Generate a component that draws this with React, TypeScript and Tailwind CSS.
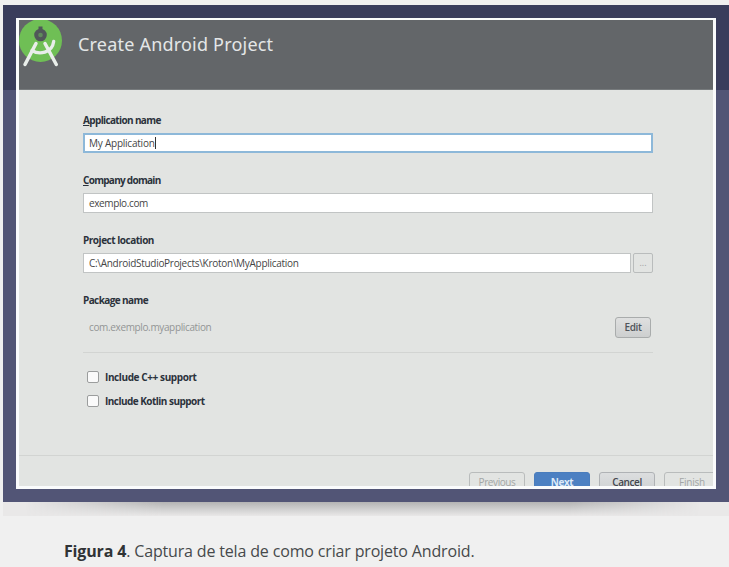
import type { ReactNode } from "react";

function Logo() {
  return (
    <svg width="44" height="50" viewBox="0 0 44 50" className="block shrink-0">
      <circle cx="21.5" cy="20.5" r="21.5" fill="#6fbf55" />
      <path d="M21.5 6.5v4" stroke="#505759" strokeWidth="4" />
      <circle cx="21.5" cy="15" r="4.3" fill="#5f8a5c" stroke="#505759" strokeWidth="4" />
      <path d="M17 23.5 6 44.5M26 23.5 37.3 44.5" stroke="#e9eeea" strokeWidth="3.5" strokeLinecap="round" />
      <path d="M13 30.5C20 35 33 33.5 34.7 21.5" fill="none" stroke="#e9eeea" strokeWidth="3.3" strokeLinecap="round" />
    </svg>
  );
}

function Label({ children, track }: { children: ReactNode; track: string }) {
  return (
    <div className={`h-[14px] whitespace-nowrap text-[10px] font-bold leading-[14px] text-[#2b323b] ${track}`}>{children}</div>
  );
}

function Check({ children, track }: { children: ReactNode; track: string }) {
  return (
    <div className="flex h-6 items-center gap-[6px] pl-1">
      <div className="h-3 w-3 rounded-[2px] border border-[#9b9d9d] bg-[#fafafa]" />
      <span className={`text-[10px] font-bold text-[#2b323b] ${track}`}>{children}</span>
    </div>
  );
}

const button = "h-[22px] w-14 shrink-0 rounded-[3px] border text-center text-[10px] leading-[18px]";

export default function App() {
  return (
    <div className="h-[567px] w-[729px] overflow-hidden bg-[#f0f0f0] pl-[3px] pt-[5px] font-['Open_Sans','Noto_Sans',sans-serif]">
      <div className="h-[497px] bg-[linear-gradient(#3a3d5c_85px,#525576_85px)] pl-[13px] pr-[13px] pt-[13px]">
        <div className="flex h-[471px] w-[700px] flex-col overflow-hidden border-[3px] border-t-2 border-[#fafbfc] bg-[#e2e4e2]">
          <header className="flex h-[70px] shrink-0 border-b border-[#777b7d] bg-[#636669]">
            <Logo />
            <h1 className="ml-[15px] mt-[11px] whitespace-nowrap font-['Noto_Sans',sans-serif] text-[18px] leading-[26px] tracking-[0.2px] text-[#e4e6e7]">
              Create Android Project
            </h1>
          </header>

          <main className="flex h-[365px] w-[634px] shrink-0 flex-col pl-16 pt-[23px]">
            <section className="h-[60px]">
              <Label track="tracking-[-0.64px]"><span className="underline">A</span>pplication name</Label>
              <div className="mt-[6px] flex h-5 items-center border-2 border-[#8db8d9] bg-white pl-1 text-[10px] tracking-[-0.23px] text-[#454545]">
                My Application<span className="h-3 w-px bg-[#333]" />
              </div>
            </section>
            <section className="h-[60px]">
              <Label track="tracking-[-0.72px]"><span className="underline">C</span>ompany domain</Label>
              <div className="mt-[6px] flex h-5 items-center border border-[#c1c4c4] bg-white pl-[5px] text-[10px] tracking-[-0.38px] text-[#454545]">
                exemplo.com
              </div>
            </section>
            <section className="h-[60px]">
              <Label track="tracking-[-0.48px]">Project location</Label>
              <div className="mt-[6px] flex gap-[2px]">
                <div className="flex h-5 flex-1 items-center border border-[#c1c4c4] bg-white pl-[5px] text-[10px] tracking-[-0.29px] text-[#454545]">
                  C:\AndroidStudioProjects\Kroton\MyApplication
                </div>
                <div className="flex h-5 w-5 items-center justify-center rounded-[2px] border border-[#b9bcbc] text-[9px] text-[#a0a2a2]">...</div>
              </div>
            </section>
            <section className="h-[60px] border-b border-[#d2d4d2]">
              <Label track="tracking-[-0.6px]">Package name</Label>
              <div className="mt-[9px] flex h-[22px] items-center justify-between pl-[6px] pr-[2px]">
                <span className="text-[10px] tracking-[-0.36px] text-[#929595]">com.exemplo.myapplication</span>
                <div className="h-[21px] w-9 rounded-[3px] border border-[#a9acac] bg-gradient-to-b from-[#dfe0e0] to-[#cdcfcf] text-center text-[10px] font-semibold leading-[19px] tracking-[-0.4px] text-[#50545a]">
                  Edit
                </div>
              </div>
            </section>
            <section className="pt-3">
              <Check track="tracking-[-0.4px]">Include C++ support</Check>
              <Check track="tracking-[-0.53px]">Include Kotlin support</Check>
            </section>
          </main>

          <footer className="flex flex-1 gap-[9px] overflow-hidden border-t border-[#d2d4d2] pl-[450px] pt-[16px]">
            <div className={`${button} border-[#b9bcbc] tracking-[-0.4px] text-[#a3a6a6]`}>Previous</div>
            <div className={`${button} border-[#4a7dbd] bg-[#4c80c2] font-bold tracking-[-0.4px] text-[#dce9f7]`}>Next</div>
            <div className={`${button} border-[#afb2b5] bg-gradient-to-b from-[#dcdedf] to-[#cdd0d2] font-semibold tracking-[-0.4px] text-[#43474d]`}>Cancel</div>
            <div className={`${button} border-[#b9bcbc] tracking-[-0.2px] text-[#a3a6a6]`}>Finish</div>
          </footer>
        </div>
      </div>
      <div className="h-[14px] bg-[#e9e8e8]">
        <div className="h-full bg-[linear-gradient(to_bottom,#b4b4b4,#cfcfcf_50%,#e9e8e8)] [mask-image:linear-gradient(to_right,transparent_3%,black_22%,black_78%,transparent_96%)]" />
      </div>
      <p className="ml-[61px] mt-[24px] whitespace-nowrap text-[16px] leading-[22px] tracking-[-0.16px] text-[#46494b]">
        <b className="text-[#303335]">Figura 4</b>. Captura de tela de como criar projeto Android.
      </p>
    </div>
  );
}
